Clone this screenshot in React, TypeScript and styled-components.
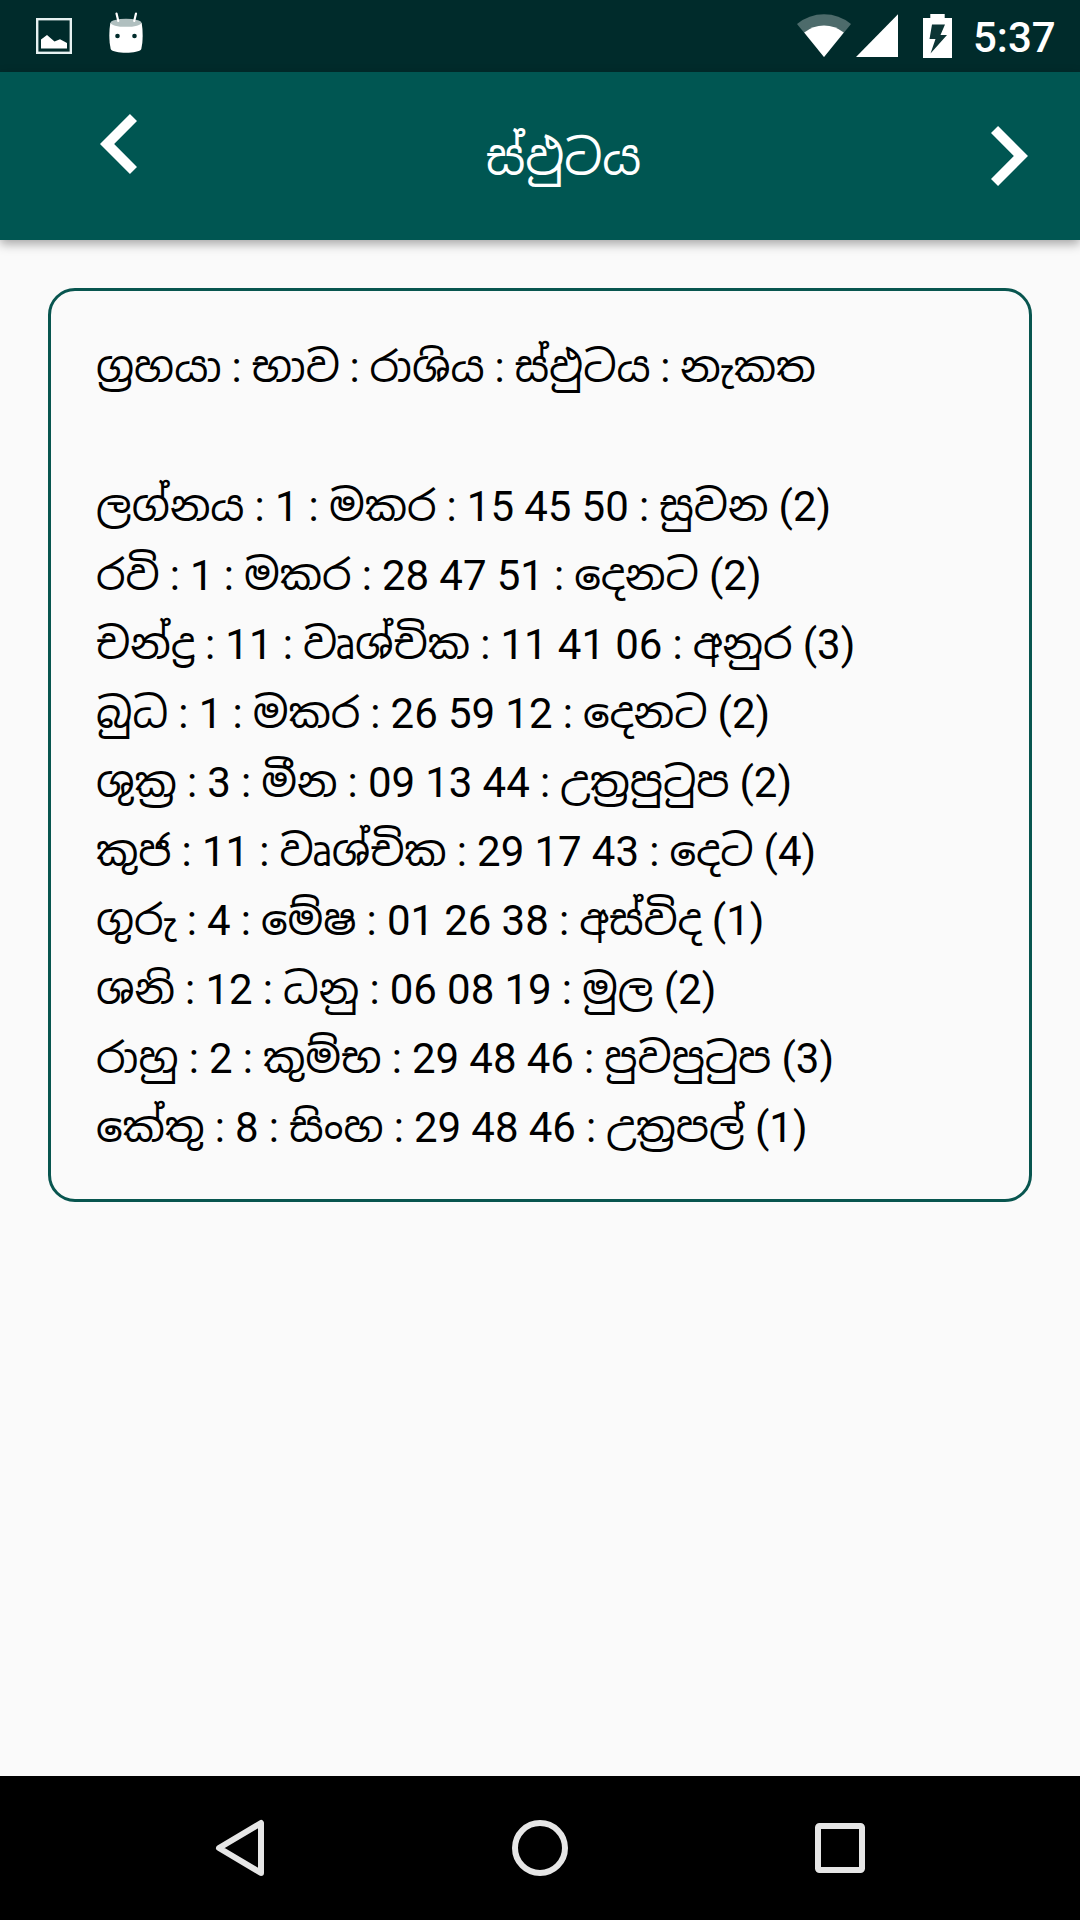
import React from 'react';
import styled, { createGlobalStyle } from 'styled-components';

const GlobalStyle = createGlobalStyle`
  * { box-sizing: border-box; }
  body { margin: 0; background: #fafafa; }
`;

const Screen = styled.div`
  display: flex;
  flex-direction: column;
  width: 1080px;
  height: 1920px;
  background: #fafafa;
  font-family: Roboto, 'Noto Sans Sinhala', 'Noto Sans', sans-serif;
  overflow: hidden;
`;

const StatusBar = styled.header`
  display: flex;
  align-items: flex-start;
  justify-content: space-between;
  height: 72px;
  padding: 0 26px 0 36px;
  background: #002b2b;
  color: #fff;
`;

const StatusGroup = styled.div`
  display: flex;
  height: 72px;
`;

const Icon = styled.svg<{ $gap?: number }>`
  display: block;
  flex: none;
  margin-left: ${(p) => p.$gap ?? 0}px;
`;

const Clock = styled.time`
  width: 81px;
  margin-left: 21px;
  font-size: 42px;
  font-weight: 500;
  line-height: 76px;
  white-space: nowrap;
`;

const AppBar = styled.nav`
  display: flex;
  justify-content: space-between;
  height: 168px;
  padding: 0 52px 0 100px;
  background: #005652;
  box-shadow: 0 4px 10px rgba(0, 0, 0, 0.34);
`;

const BarButton = styled.button<{ $top: number }>`
  width: 37px;
  height: 60px;
  margin: ${(p) => p.$top}px 0 0;
  padding: 0;
  border: 0;
  background: none;
`;

const Title = styled.h1`
  margin: 0 1px 0 0;
  color: #fff;
  font-size: 48px;
  font-weight: 400;
  line-height: 172px;
`;

const Content = styled.main`
  flex: 1;
  padding: 48px;
`;

const Card = styled.section`
  height: 914px;
  padding: 42px 45px;
  border: 3px solid #08554f;
  border-radius: 27px;
`;

const Line = styled.p<{ $after?: number; $tighten?: number }>`
  margin: 0 0 ${(p) => p.$after ?? 0}px;
  height: 69px;
  color: #000;
  font-size: 42px;
  line-height: 69px;
  white-space: nowrap;
  word-spacing: -${(p) => p.$tighten ?? 0.28}px;
`;

const NavBar = styled.footer`
  display: flex;
  align-items: center;
  justify-content: space-between;
  height: 144px;
  padding: 0 215px 0 214px;
  background: #000;
`;

const header = 'ග්‍රහයා : භාව : රාශිය : ස්ඵුටය : නැකත';

const rows = [
  'ලග්නය : 1 : මකර : 15 45 50 : සුවන (2)',
  'රවි : 1 : මකර : 28 47 51 : දෙනට (2)',
  'චන්ද්‍ර : 11 : වෘශ්චික : 11 41 06 : අනුර (3)',
  'බුධ : 1 : මකර : 26 59 12 : දෙනට (2)',
  'ශුක්‍ර : 3 : මීන : 09 13 44 : උත්‍රපුටුප (2)',
  'කුජ : 11 : වෘශ්චික : 29 17 43 : දෙට (4)',
  'ගුරු : 4 : මේෂ : 01 26 38 : අස්විද (1)',
  'ශනි : 12 : ධනු : 06 08 19 : මුල (2)',
  'රාහු : 2 : කුම්භ : 29 48 46 : පුවපුටුප (3)',
  'කේතු : 8 : සිංහ : 29 48 46 : උත්‍රපල් (1)',
];

export default function App() {
  return (
    <Screen>
      <GlobalStyle />
      <StatusBar>
        <StatusGroup>
          <Icon width="36" height="72" viewBox="0 0 36 72">
            <rect x="1.2" y="19.2" width="33.6" height="33.6" fill="none" stroke="#e6f1f1" strokeWidth="2.4" />
            <path d="M5 48.5V39.5L11 35L18.5 41.5L24 39.3L31 43V48.5Z" fill="#fff" />
          </Icon>
          <Icon $gap={36} width="36" height="72" viewBox="0 0 36 72">
            <path d="M2.3 23C1 31 .8 41 2.7 49C5 54 31 54 33.3 49C35.2 41 35 31 33.7 23Z" fill="#fff" />
            <ellipse cx="18" cy="22.8" rx="15.5" ry="4" fill="#b0bfbf" />
            <path d="M8.5 13.5L10.3 21M28 13.5L26.2 21" stroke="#fff" strokeWidth="2.2" strokeLinecap="round" />
            <circle cx="9.5" cy="36" r="2.3" fill="#002b2b" />
            <circle cx="26.5" cy="36" r="2.3" fill="#002b2b" />
          </Icon>
        </StatusGroup>
        <StatusGroup>
          <Icon width="54" height="72" viewBox="0 0 54 72">
            <path d="M27 57L0 24Q12 14.3 27 14.3T54 24Z" fill="#4d6b6b" />
            <path d="M27 57L7.2 32.5Q16 25.5 27 25.5T46.8 32.5Z" fill="#fff" />
          </Icon>
          <Icon $gap={5} width="42" height="72" viewBox="0 0 42 72">
            <path d="M42 14.3V57H0Z" fill="#fff" />
          </Icon>
          <Icon $gap={25} width="29" height="72" viewBox="0 0 29 72">
            <path d="M7.3 14H21.7V18H29V58H0V18H7.3Z" fill="#fff" />
            <path d="M9 24.5H22L17.5 35H24L7.5 53.5L12.5 39H6.5Z" fill="#0d3535" />
          </Icon>
          <Clock>5:37</Clock>
        </StatusGroup>
      </StatusBar>
      <AppBar>
        <BarButton $top={42} aria-label="Previous">
          <Icon width="37" height="60" viewBox="8 6 7.41 12">
            <path d="M15.41 7.41L14 6l-6 6 6 6 1.41-1.41L10.83 12z" fill="#fff" />
          </Icon>
        </BarButton>
        <Title>ස්ඵුටය</Title>
        <BarButton $top={54} aria-label="Next">
          <Icon width="37" height="60" viewBox="8.59 6 7.41 12">
            <path d="M10 6L8.59 7.41 13.17 12l-4.58 4.59L10 18l6-6z" fill="#fff" />
          </Icon>
        </BarButton>
      </AppBar>
      <Content>
        <Card>
          <Line $after={70} $tighten={0.6}>{header}</Line>
          {rows.map((row) => (
            <Line key={row}>{row}</Line>
          ))}
        </Card>
      </Content>
      <NavBar>
        <Icon width="51" height="60" viewBox="0 0 51 60">
          <path d="M47 5V55L5 30Z" fill="none" stroke="#e6e6e6" strokeWidth="6" strokeLinejoin="round" />
        </Icon>
        <Icon width="56" height="56" viewBox="0 0 56 56">
          <circle cx="28" cy="28" r="25" fill="none" stroke="#e6e6e6" strokeWidth="6" />
        </Icon>
        <Icon width="50" height="50" viewBox="0 0 50 50">
          <rect x="3" y="3" width="44" height="44" rx="1.5" fill="none" stroke="#e6e6e6" strokeWidth="6" />
        </Icon>
      </NavBar>
    </Screen>
  );
}
